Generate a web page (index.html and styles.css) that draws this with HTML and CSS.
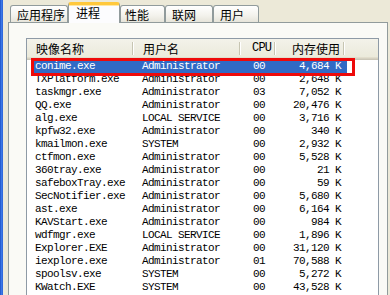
FILE: index.html
```html
<!DOCTYPE html>
<html>
<head>
<meta charset="utf-8">
<link rel="stylesheet" href="styles.css">
</head>
<body>
<div class="win">
  <div class="edge"></div>
  <div class="main">
    <div class="tabs">
      <div class="tab t1">应用程序</div>
      <div class="tab t2 active">进程</div>
      <div class="tab t3">性能</div>
      <div class="tab t4">联网</div>
      <div class="tab t5">用户</div>
    </div>
    <div class="panel">
      <div class="list">
        <div class="header">
          <div class="hc">映像名称</div>
          <div class="hc">用户名</div>
          <div class="hc cpu">CPU</div>
          <div class="hc mem">内存使用</div>
          <div class="hc last"></div>
        </div>
        <div class="rows">
          <div class="row sel"><span class="c">conime.exe</span><span class="c">Administrator</span><span class="c n">00</span><span class="c m">4,684 K</span></div>
          <div class="row"><span class="c">TXPlatform.exe</span><span class="c">Administrator</span><span class="c n">00</span><span class="c m">2,648 K</span></div>
          <div class="row"><span class="c">taskmgr.exe</span><span class="c">Administrator</span><span class="c n">03</span><span class="c m">7,052 K</span></div>
          <div class="row"><span class="c">QQ.exe</span><span class="c">Administrator</span><span class="c n">00</span><span class="c m">20,476 K</span></div>
          <div class="row"><span class="c">alg.exe</span><span class="c">LOCAL SERVICE</span><span class="c n">00</span><span class="c m">3,716 K</span></div>
          <div class="row"><span class="c">kpfw32.exe</span><span class="c">Administrator</span><span class="c n">00</span><span class="c m">340 K</span></div>
          <div class="row"><span class="c">kmailmon.exe</span><span class="c">SYSTEM</span><span class="c n">00</span><span class="c m">2,932 K</span></div>
          <div class="row"><span class="c">ctfmon.exe</span><span class="c">Administrator</span><span class="c n">00</span><span class="c m">5,528 K</span></div>
          <div class="row"><span class="c">360tray.exe</span><span class="c">Administrator</span><span class="c n">00</span><span class="c m">21 K</span></div>
          <div class="row"><span class="c">safeboxTray.exe</span><span class="c">Administrator</span><span class="c n">00</span><span class="c m">59 K</span></div>
          <div class="row"><span class="c">SecNotifier.exe</span><span class="c">Administrator</span><span class="c n">00</span><span class="c m">5,680 K</span></div>
          <div class="row"><span class="c">ast.exe</span><span class="c">Administrator</span><span class="c n">00</span><span class="c m">6,164 K</span></div>
          <div class="row"><span class="c">KAVStart.exe</span><span class="c">Administrator</span><span class="c n">00</span><span class="c m">984 K</span></div>
          <div class="row"><span class="c">wdfmgr.exe</span><span class="c">LOCAL SERVICE</span><span class="c n">00</span><span class="c m">1,896 K</span></div>
          <div class="row"><span class="c">Explorer.EXE</span><span class="c">Administrator</span><span class="c n">00</span><span class="c m">31,120 K</span></div>
          <div class="row"><span class="c">iexplore.exe</span><span class="c">Administrator</span><span class="c n">01</span><span class="c m">70,588 K</span></div>
          <div class="row"><span class="c">spoolsv.exe</span><span class="c">SYSTEM</span><span class="c n">00</span><span class="c m">5,272 K</span></div>
          <div class="row"><span class="c">KWatch.EXE</span><span class="c">SYSTEM</span><span class="c n">00</span><span class="c m">43,528 K</span></div>
        </div>
        <div class="mark"></div>
      </div>
    </div>
  </div>
</div>
</body>
</html>
```

FILE: styles.css
```css
* { box-sizing: border-box; }
html, body { margin: 0; padding: 0; }
body {
  width: 390px;
  height: 295px;
  overflow: hidden;
  background: #ECE9D8;
  font-family: "Noto Sans CJK SC", sans-serif;
  font-size: 12px;
  color: #000;
}
.win { display: flex; height: 295px; overflow: hidden; }
.edge {
  flex: none;
  width: 3px;
  background: linear-gradient(to right, #1D50C6, #3C78E6, #2B62D8);
}
.main {
  flex: 1;
  min-height: 0;
  display: flex;
  flex-direction: column;
  padding: 2px 0 0 5px;
}
.tabs {
  flex: none;
  display: flex;
  align-items: flex-end;
  height: 20px;
  padding-left: 2px;
  position: relative;
  z-index: 1;
}
.tab {
  height: 17px;
  border: 1px solid #919B9C;
  border-bottom: none;
  border-radius: 3px 3px 0 0;
  background: linear-gradient(#FFFFFF, #F3F2EC 60%, #E6E4DA);
  padding-left: 6px;
  line-height: 17px;
  white-space: nowrap;
}
.t1 { width: 58px; }
.t2 { width: 52px; }
.t3 { width: 45px; padding-left: 4px; }
.t4 { width: 48px; }
.t5 { width: 46px; }
.tab.active {
  height: 21px;
  margin-bottom: -1px;
  background: #FCFCFE;
  border-top: 3px solid #FFC83C;
  box-shadow: inset 0 1px 0 #FFE7A2;
  padding-left: 7px;
  line-height: 16px;
}
.panel {
  flex: 1;
  min-height: 0;
  display: flex;
  flex-direction: column;
  width: 380px;
  border: 1px solid #919B9C;
  border-bottom: none;
  background: #FAFAF6;
  padding: 15px 0 0 17px;
}
.list {
  flex: 1;
  min-height: 0;
  position: relative;
  width: 353px;
  border: 1px solid #8E9AA6;
  border-bottom: none;
  background: #FFFFFF;
  overflow: hidden;
}
.header {
  display: grid;
  grid-template-columns: 107px 107px 35px 69px 1fr;
  height: 21px;
  background: linear-gradient(to bottom, #F3F2EA 0, #EBEADB 18px, #E2DECD 18px, #E2DECD 19px, #D6D2C2 19px, #D6D2C2 20px, #CBC7B8 20px);
}
.hc {
  padding-left: 9px;
  line-height: 19px;
  white-space: nowrap;
  background-image: linear-gradient(#C7C5B2, #C7C5B2), linear-gradient(#FFFFFF, #FFFFFF);
  background-repeat: no-repeat;
  background-size: 1px 13px, 1px 13px;
  background-position: right 1px top 3px, right 0 top 3px;
}
.hc.cpu {
  padding-left: 11px;
  font-family: "Liberation Mono", monospace;
  font-size: 12px;
  letter-spacing: -0.8px;
}
.hc.mem { text-align: right; padding-right: 5px; }
.hc.last { background-image: none; }
.rows {
  font-family: "Liberation Mono", monospace;
  font-size: 11px;
  letter-spacing: -0.6px;
}
.row {
  display: grid;
  grid-template-columns: 107px 107px 35px 69px;
  width: 320px;
  height: 13px;
  line-height: 13px;
  white-space: nowrap;
}
.row.sel {
  color: #FFFFFF;
  background: linear-gradient(to right, transparent 4px, #316AC5 4px);
}
.c { padding-left: 8px; overflow: hidden; }
.c.n { padding-left: 12px; }
.c.m { text-align: right; padding-right: 4px; }
.mark {
  position: absolute;
  left: 4px;
  top: 19px;
  width: 324px;
  height: 18px;
  border: 3px solid #EE0A0A;
}
```
